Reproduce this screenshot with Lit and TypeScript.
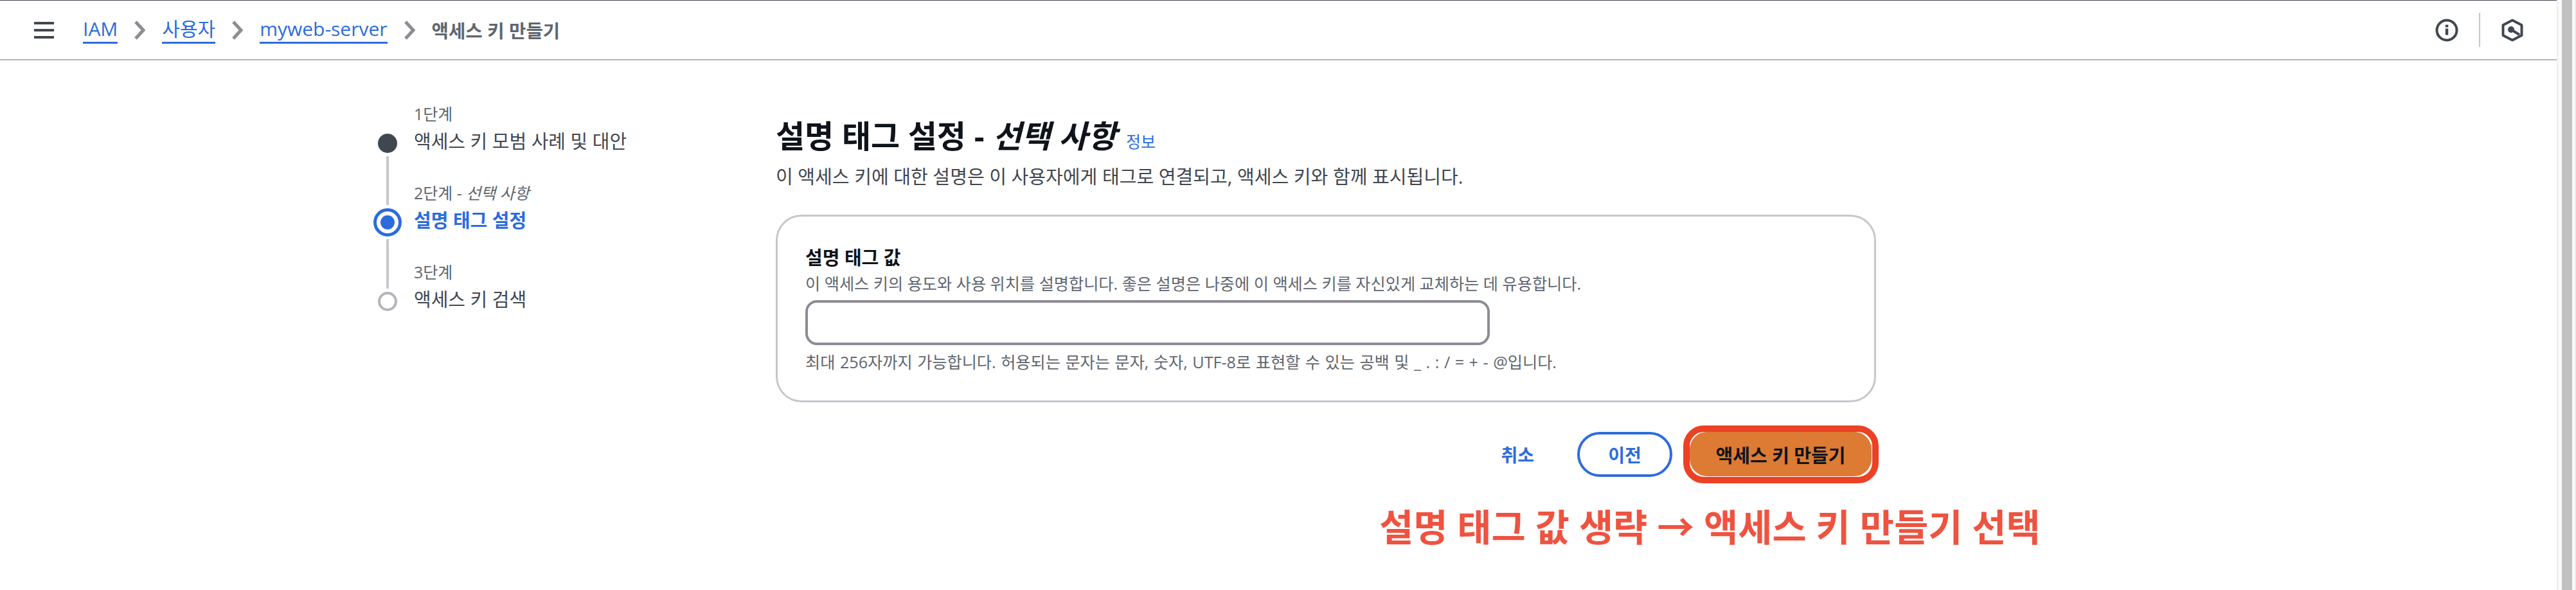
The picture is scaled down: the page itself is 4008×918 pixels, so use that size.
import { LitElement, html, css } from "lit";
import { customElement } from "lit/decorators.js";

@customElement("app-root")
export class AppRoot extends LitElement {
  static styles = css`
    :host {
      display: flex;
      width: 4008px;
      height: 918px;
      overflow: hidden;
      background: #fff;
      font-family: "Open Sans", "Noto Sans CJK KR", sans-serif;
      color: #414750;
    }
    .page { width: 3978px; height: 918px; flex: none; }
    .sb { flex: 1; background: #fafafa; border-left: 2px solid #eee; border-right: 2px solid #eee; padding: 0 4px 0 6px; box-sizing: border-box; }
    .thumb { background: #c1c1c1; height: 918px; }
    .top {
      box-sizing: border-box;
      height: 94px;
      border-top: 1px solid #414750;
      border-bottom: 2px solid #b4b4bb;
      display: flex;
      align-items: center;
      padding-left: 53px;
    }
    .burger { width: 31px; height: 28px; margin-right: 45px; flex: none; display: block; }
    a { color: #2c6cdc; }
    .crumb { font-size: 30px; line-height: 40px; text-decoration: none; border-bottom: 3px solid #2c6cdc; }
    .chev { width: 17px; height: 30px; margin: 0 26px; flex: none; }
    .cur { font-size: 28.7px; font-weight: 600; color: #5f6670; }
    .spacer { flex: 1; }
    .info { width: 36px; height: 36px; display: block; }
    .vr { width: 2px; height: 53px; background: #c6c6cd; margin: 0 33px 0 32px; }
    .hex { width: 34px; height: 36px; display: block; margin-right: 52px; }

    .main { display: flex; padding: 64px 0 0 580px; }
    .steps { width: 627px; flex: none; display: flex; flex-direction: column; margin-top: 2px; }
    .step { display: grid; grid-template-columns: 46px 1fr; column-gap: 18px; align-items: start; margin-bottom: 37px; }
    .step:last-child { margin-bottom: 0; }
    .step .cap { grid-column: 2; font-size: 25px; line-height: 34px; height: 34px; margin-bottom: 6px; color: #5f6670; }
    .step .mark { grid-column: 1; display: flex; justify-content: center; align-items: center; height: 46px; }
    .step .name { font-size: 29px; line-height: 40px; color: #414750; white-space: nowrap; }
    .rail { grid-column: 1; display: flex; justify-content: center; height: 0; }
    .bar { width: 4px; height: 76px; background: #c6c6cd; flex: none; margin-top: -3px; }
    .bar.after-current { height: 77px; margin-top: 3px; }
    .dot { width: 30px; height: 30px; border-radius: 50%; background: #414750; }
    .cur-ring { width: 44px; height: 44px; box-sizing: border-box; border-radius: 50%; border: 5px solid #2c6cdc; display: flex; align-items: center; justify-content: center; }
    .cur-ring i { display: block; width: 22px; height: 22px; background: #2c6cdc; border-radius: 50%; }
    .empty { width: 30px; height: 30px; box-sizing: border-box; border-radius: 50%; border: 4px solid #b4b4bb; }
    .name.on { color: #2c6cdc; font-weight: 700; }

    .body { width: 1712px; flex: none; margin-top: 22px; }
    h1 { margin: 0; height: 62px; font-size: 49px; line-height: 62px; font-weight: 700; color: #0f141a; white-space: nowrap; }
    h1 a { font-size: 25px; line-height: 1; font-weight: 400; text-decoration: none; margin-left: 2px; }
    .lead { font-size: 29.1px; line-height: 40px; margin: 13px 0 0; color: #414750; }
    .card {
      margin-top: 39px;
      box-sizing: border-box;
      height: 292px;
      border: 3px solid #c6c6cd;
      border-radius: 40px;
      padding: 44px 43px 0;
    }
    .label { font-size: 29px; line-height: 40px; font-weight: 700; color: #0f141a; }
    .hint { font-size: 25.2px; line-height: 34px; color: #5f6670; margin-top: 3px; }
    .field { box-sizing: border-box; display: block; width: 1065px; height: 70px; border: 4px solid #8c8c94; border-radius: 18px; margin-top: 9px; background: #fff; padding: 0; }
    .note { font-size: 25.2px; line-height: 34px; word-spacing: 1px; color: #5f6670; margin-top: 9px; }
    .actions { display: flex; justify-content: flex-end; align-items: center; margin-top: 36px; margin-right: -4px; }
    .cancel { font-size: 28px; font-weight: 700; text-decoration: none; margin-right: 67px; }
    .prev { box-sizing: border-box; width: 148px; height: 70px; border: 4px solid #2c6cdc; border-radius: 35px; background: #fff; color: #2c6cdc; font: 700 28px "Open Sans", "Noto Sans CJK KR", sans-serif; margin-right: 17px; padding: 0; }
    .ring { box-sizing: border-box; width: 304px; height: 90px; border: 10px solid #ec4125; border-radius: 32px; display: flex; background: #fff; padding: 0 1px 1px 0; }
    .go { flex: 1; border: 0; border-radius: 27px; background: #dd7a33; color: #0f141a; font: 700 29px "Open Sans", "Noto Sans CJK KR", sans-serif; padding: 0; }
    .callout { margin: 33px 0 0 939px; font-size: 57.8px; line-height: 70px; font-weight: 700; color: #ef5340; white-space: nowrap; }
  `;

  render() {
    const chev = html`<svg class="chev" viewBox="0 0 17 30"><path d="M2 2 L14 15 L2 28" fill="none" stroke="#8c8c94" stroke-width="5"/></svg>`;
    return html`
      <div class="page">
        <header class="top">
          <svg class="burger" viewBox="0 0 31 28"><path d="M0 3h31M0 14h31M0 25h31" stroke="#414750" stroke-width="4" fill="none"/></svg>
          <a class="crumb" href="#">IAM</a>${chev}
          <a class="crumb" href="#">사용자</a>${chev}
          <a class="crumb" href="#">myweb-server</a>${chev}
          <span class="cur">액세스 키 만들기</span>
          <span class="spacer"></span>
          <svg class="info" viewBox="0 0 36 36"><circle cx="18" cy="18" r="15.5" fill="none" stroke="#414750" stroke-width="4"/><path d="M18 15.5v10" stroke="#414750" stroke-width="4.5"/><path d="M18 9.5v4" stroke="#414750" stroke-width="4.5"/></svg>
          <span class="vr"></span>
          <svg class="hex" viewBox="0 0 34 36"><path d="M17 2.5 L31.5 10 V26 L17 33.5 L2.5 26 V10 Z" fill="none" stroke="#414750" stroke-width="4" stroke-linejoin="round"/><circle cx="15" cy="17" r="5" fill="#414750"/><path d="M15 17 L28 25" stroke="#414750" stroke-width="4"/></svg>
        </header>
        <div class="main">
          <nav class="steps">
            <div class="step">
              <div class="cap">1단계</div>
              <div class="mark"><span class="dot"></span></div>
              <div class="name">액세스 키 모범 사례 및 대안</div>
              <div class="rail"><span class="bar"></span></div>
            </div>
            <div class="step">
              <div class="cap">2단계 - <i>선택 사항</i></div>
              <div class="mark"><span class="cur-ring"><i></i></span></div>
              <div class="name on">설명 태그 설정</div>
              <div class="rail"><span class="bar after-current"></span></div>
            </div>
            <div class="step">
              <div class="cap">3단계</div>
              <div class="mark"><span class="empty"></span></div>
              <div class="name">액세스 키 검색</div>
            </div>
          </nav>
          <section class="body">
            <h1>설명 태그 설정 - <em>선택 사항</em> <a href="#">정보</a></h1>
            <p class="lead">이 액세스 키에 대한 설명은 이 사용자에게 태그로 연결되고, 액세스 키와 함께 표시됩니다.</p>
            <div class="card">
              <div class="label">설명 태그 값</div>
              <div class="hint">이 액세스 키의 용도와 사용 위치를 설명합니다. 좋은 설명은 나중에 이 액세스 키를 자신있게 교체하는 데 유용합니다.</div>
              <input class="field" type="text" />
              <div class="note">최대 256자까지 가능합니다. 허용되는 문자는 문자, 숫자, UTF-8로 표현할 수 있는 공백 및 _ . : / = + - @입니다.</div>
            </div>
            <div class="actions">
              <a class="cancel" href="#">취소</a>
              <button class="prev">이전</button>
              <div class="ring"><button class="go">액세스 키 만들기</button></div>
            </div>
            <div class="callout">설명 태그 값 생략 → 액세스 키 만들기 선택</div>
          </section>
        </div>
      </div>
      <div class="sb"><div class="thumb"></div></div>
    `;
  }
}
